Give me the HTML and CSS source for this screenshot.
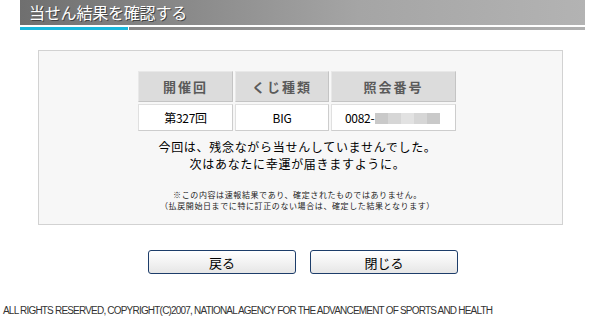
FILE: index.html
```html
<!DOCTYPE html>
<html lang="ja">
<head>
    <meta charset="UTF-8">
    <title>当せん結果を確認する</title>
    <link rel="stylesheet" href="styles.css">
</head>
<body>
    <div class="head">
        <h1 class="head-title">当せん結果を確認する</h1>
        <div class="head-line">
            <span class="line-cyan"></span>
            <span class="line-gray"></span>
        </div>
    </div>

    <div class="result">
        <table class="result-table">
            <tr>
                <th class="col-kai">開催回</th>
                <th class="col-kind">くじ種類</th>
                <th class="col-no">照会番号</th>
            </tr>
            <tr>
                <td>第327回</td>
                <td>BIG</td>
                <td class="no-cell">0082-<span class="masked"><i class="m1"></i><i class="m2"></i><i class="m3"></i><i class="m2"></i><i class="m1"></i></span></td>
            </tr>
        </table>
        <p class="message">今回は、残念ながら当せんしていませんでした。<br>次はあなたに幸運が届きますように。</p>
        <p class="note">※この内容は速報結果であり、確定されたものではありません。<br>（払戻開始日までに特に訂正のない場合は、確定した結果となります）</p>
    </div>

    <div class="buttons">
        <button class="btn">戻る</button>
        <button class="btn">閉じる</button>
    </div>

    <p class="copy">ALL RIGHTS RESERVED, COPYRIGHT(C)2007, NATIONAL AGENCY FOR THE ADVANCEMENT OF SPORTS AND HEALTH</p>
</body>
</html>
```

FILE: styles.css
```css
body {
    margin: 0;
    padding: 0;
    background: #fff;
    font-family: "Noto Sans CJK JP", "Liberation Sans", sans-serif;
    color: #000;
}

/* 見出し */
.head {
    margin-left: 20px;
    width: 565px;
}

.head-title {
    margin: 0;
    height: 25px;
    padding-left: 9px;
    background: linear-gradient(to right, #6f6f6f, #a5a5a5 60%, #b3b3b3);
    color: #fff;
    font-size: 16px;
    font-weight: normal;
    line-height: 24px;
    text-shadow: 1px 1px 0 #444;
    letter-spacing: -0.2px;
}

.head-line {
    display: flex;
    height: 3px;
    margin-top: 2px;
}

.line-cyan {
    width: 108px;
    background: #1ab7dc;
}

.line-gray {
    flex: 1;
    margin-left: 1px;
    background: linear-gradient(to right, #858585, #b0b0b0);
}

/* 結果ボックス */
.result {
    margin: 20px 0 0 38px;
    width: 523px;
    height: 173px;
    border: 1px solid #d2d2d2;
    background: #f7f7f7;
}

.result-table {
    margin: 18px 0 0 97px;
    border-collapse: separate;
    border-spacing: 2px;
}

.result-table th,
.result-table td {
    padding: 0;
    text-align: center;
    border: 1px solid #cfcfcf;
}

.result-table th {
    height: 29px;
    background: #dcdcdc;
    color: #5a5a5a;
    font-size: 13px;
    font-weight: bold;
    letter-spacing: 2px;
    border-color: #e8e8e8 #c4c4c4 #c4c4c4 #e8e8e8;
}

.result-table td {
    height: 25px;
    background: #fff;
    font-size: 12px;
    letter-spacing: -0.3px;
    border-color: #e0e0e0 #cdcdcd #cdcdcd #e0e0e0;
}

.col-kai { width: 93px; }
.col-kind { width: 92px; }
.col-no { width: 123px; }

.no-cell {
    text-align: left !important;
    padding-left: 13px !important;
}

.masked {
    display: inline-flex;
    vertical-align: -1px;
    margin-left: 1px;
    filter: blur(0.6px);
}

.masked i {
    display: block;
    width: 13px;
    height: 11px;
}

.m1 { background: #c9c9c9; }
.m2 { background: #d6d6d6; }
.m3 { background: #e2e2e2; }

.message {
    margin: 5px 0 0;
    text-align: center;
    font-size: 12px;
    line-height: 17.4px;
    letter-spacing: 0.7px;
    padding-right: 6px;
}

.note {
    margin: 16px 0 0;
    text-align: center;
    font-size: 8px;
    line-height: 11.6px;
    letter-spacing: 0.6px;
    color: #222;
    padding-right: 6px;
}

/* ボタン */
.buttons {
    display: flex;
    gap: 14px;
    margin: 25px 0 0 148px;
}

.btn {
    width: 148px;
    height: 24px;
    padding: 0;
    border: 1px solid #1d3d6a;
    border-radius: 3px;
    background: linear-gradient(#ffffff, #f3f3f3 50%, #e6e6e6);
    font-family: "Noto Sans CJK JP", sans-serif;
    font-size: 13px;
    color: #000;
}

.copy {
    margin: 31px 0 0 3px;
    font-family: "Liberation Sans", sans-serif;
    font-size: 10px;
    letter-spacing: -0.8px;
    color: #333;
}
```
